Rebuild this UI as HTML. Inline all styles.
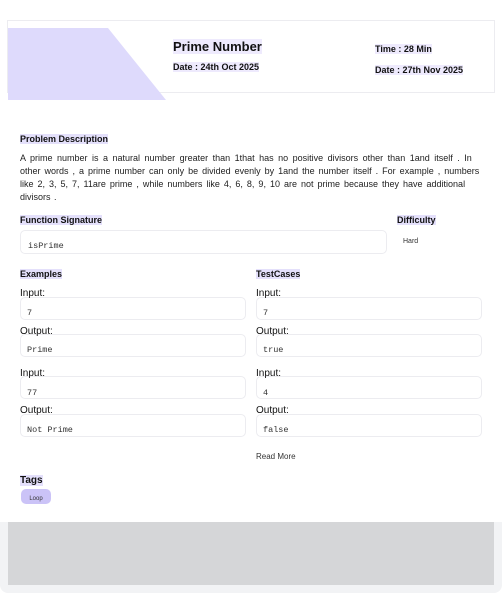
<!DOCTYPE html>
<html><head><meta charset="utf-8"><style>
*{margin:0;padding:0;box-sizing:border-box}
body{width:502px;height:593px;background:#fff;position:relative;overflow:hidden;font-family:"Liberation Sans",sans-serif;color:#111}
.a{position:absolute;white-space:nowrap;z-index:2}
.h{background:#e4e0fb;font-weight:bold}
.box{position:absolute;border:1px solid #ececf0;border-radius:5px;background:#fff;z-index:1}
.mono{font-family:"Liberation Mono",monospace;font-size:8.5px;color:#333;position:absolute;left:6px}
.lbl{font-size:10px;color:#111}
.d{font-size:9px;color:#222;position:absolute;left:20px;white-space:nowrap;word-spacing:1px}
</style></head><body>
<div style="position:absolute;left:7px;top:20px;width:488px;height:73px;border:1px solid #ececf0;background:#fff"></div>
<svg style="position:absolute;left:0;top:0" width="200" height="110"><polygon points="8,28 108,28 166,100 8,100" fill="#dedafc"/></svg>
<div class="a h" style="left:173px;top:39px;font-size:13px;background:#eeeafd">Prime Number</div>
<div class="a h" style="left:173px;top:62px;font-size:9px;background:#eeeafd">Date : 24th Oct 2025</div>
<div class="a h" style="left:375px;top:44px;font-size:9px;background:#eeeafd">Time : 28 Min</div>
<div class="a h" style="left:375px;top:65px;font-size:9px;background:#eeeafd">Date : 27th Nov 2025</div>

<div class="a h" style="left:20px;top:134px;font-size:9px">Problem Description</div>
<div class="d" style="top:153px;word-spacing:2px">A prime number is a natural number greater than 1that has no positive divisors other than 1and itself . In</div>
<div class="d" style="top:166px;word-spacing:1.5px">other words , a prime number can only be divided evenly by 1and the number itself . For example , numbers</div>
<div class="d" style="top:179px;word-spacing:1.5px">like 2, 3, 5, 7, 11are prime , while numbers like 4, 6, 8, 9, 10 are not prime because they have additional</div>
<div class="d" style="top:192px">divisors .</div>

<div class="a h" style="left:20px;top:215px;font-size:9px">Function Signature</div>
<div class="box" style="left:20px;top:230px;width:367px;height:24px"><span class="mono" style="top:10px;left:7px">isPrime</span></div>
<div class="a h" style="left:397px;top:215px;font-size:9px">Difficulty</div>
<div class="a" style="left:403px;top:238px;font-size:7px;color:#333">Hard</div>

<div class="a h" style="left:20px;top:269px;font-size:9px">Examples</div>
<div class="a h" style="left:256px;top:269px;font-size:9px">TestCases</div>

<div class="a lbl" style="left:20px;top:288px">Input:</div>
<div class="box" style="left:20px;top:297px;width:226px;height:23px"><span class="mono" style="top:10px">7</span></div>
<div class="a lbl" style="left:20px;top:326px">Output:</div>
<div class="box" style="left:20px;top:334px;width:226px;height:23px"><span class="mono" style="top:10px">Prime</span></div>
<div class="a lbl" style="left:20px;top:368px">Input:</div>
<div class="box" style="left:20px;top:376px;width:226px;height:23px"><span class="mono" style="top:11px">77</span></div>
<div class="a lbl" style="left:20px;top:405px">Output:</div>
<div class="box" style="left:20px;top:414px;width:226px;height:23px"><span class="mono" style="top:10px">Not Prime</span></div>

<div class="a lbl" style="left:256px;top:288px">Input:</div>
<div class="box" style="left:256px;top:297px;width:226px;height:23px"><span class="mono" style="top:10px">7</span></div>
<div class="a lbl" style="left:256px;top:326px">Output:</div>
<div class="box" style="left:256px;top:334px;width:226px;height:23px"><span class="mono" style="top:10px">true</span></div>
<div class="a lbl" style="left:256px;top:368px">Input:</div>
<div class="box" style="left:256px;top:376px;width:226px;height:23px"><span class="mono" style="top:11px">4</span></div>
<div class="a lbl" style="left:256px;top:405px">Output:</div>
<div class="box" style="left:256px;top:414px;width:226px;height:23px"><span class="mono" style="top:10px">false</span></div>

<div class="a" style="left:256px;top:452px;font-size:8px;color:#333">Read More</div>
<div class="a h" style="left:20px;top:475px;font-size:10px">Tags</div>
<div class="a" style="left:21px;top:489px;width:30px;height:15px;background:#cbc3f7;border-radius:5px;font-size:6px;color:#333;text-align:center;line-height:20px">Loop</div>

<div style="position:absolute;left:0;top:522px;width:502px;height:71px;background:#f2f3f5;border-radius:0 0 8px 8px"></div>
<div style="position:absolute;left:8px;top:522px;width:486px;height:63px;background:#d5d6d8"></div>
</body></html>
